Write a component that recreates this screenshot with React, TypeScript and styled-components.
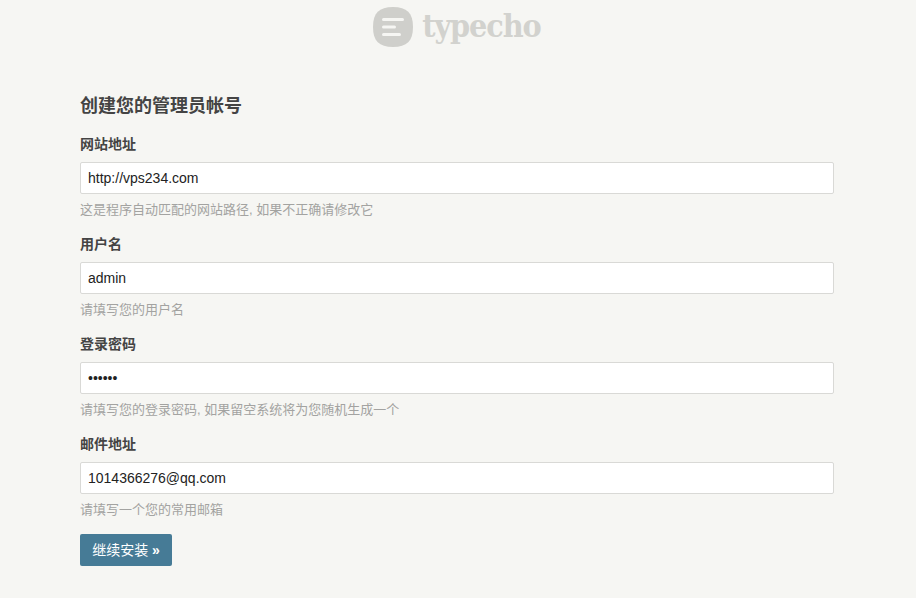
import React from "react";
import styled, { createGlobalStyle } from "styled-components";

const Global = createGlobalStyle`
  html, body { margin: 0; padding: 0; background: #f6f6f3; }
  body { font-family: "Liberation Sans", "Noto Sans CJK SC", sans-serif; font-size: 14px; color: #444; }
`;

const Page = styled.div`
  width: 916px;
  height: 598px;
  overflow: hidden;
  display: flex;
  flex-direction: column;
  align-items: center;
`;

const Logo = styled.div`
  display: flex;
  align-items: center;
  gap: 9px;
  height: 54px;
  margin-left: -2px;
`;

const Wordmark = styled.span`
  font-family: "DejaVu Serif Condensed", "DejaVu Serif", serif;
  font-weight: 700;
  font-size: 32px;
  letter-spacing: -1.1px;
  line-height: 1;
  color: #d2d2ce;
  margin-top: -2px;
`;

const Form = styled.form`
  width: 754px;
  margin: 0 0 0 -2px;
  padding-top: 40px;
`;

const Title = styled.h1`
  margin: 0 0 16px;
  font-size: 18px;
  line-height: 24px;
  font-weight: 700;
  color: #444;
`;

const Field = styled.div`
  display: flex;
  flex-direction: column;
  height: 100px;
`;

const Label = styled.label`
  font-size: 14px;
  line-height: 20px;
  font-weight: 700;
  color: #444;
  margin-bottom: 8px;
`;

const Input = styled.input`
  box-sizing: border-box;
  width: 100%;
  height: 32px;
  padding: 0 7px;
  margin: 0;
  border: 1px solid #d9d9d6;
  border-radius: 2px;
  background: #fff;
  color: #222;
  font-family: "Liberation Sans", "Noto Sans CJK SC", sans-serif;
  font-size: 14px;
  outline: none;
`;

const Hint = styled.p`
  margin: 6px 0 0;
  font-size: 13px;
  line-height: 19px;
  color: #a3a3a1;
`;

const Submit = styled.button`
  display: block;
  box-sizing: border-box;
  width: 92px;
  height: 32px;
  margin-top: 0;
  padding: 0 0 2px;
  border: none;
  border-radius: 2px;
  background: #467b96;
  color: #fff;
  font-family: "Liberation Sans", "Noto Sans CJK SC", sans-serif;
  font-size: 14px;
  font-weight: 400;
`;

const Arrows = styled.b`
  font-weight: 700;
`;

const fields = [
  { label: "网站地址", value: "http://vps234.com", type: "text", hint: "这是程序自动匹配的网站路径, 如果不正确请修改它" },
  { label: "用户名", value: "admin", type: "text", hint: "请填写您的用户名" },
  { label: "登录密码", value: "123456", type: "password", hint: "请填写您的登录密码, 如果留空系统将为您随机生成一个" },
  { label: "邮件地址", value: "1014366276@qq.com", type: "text", hint: "请填写一个您的常用邮箱" },
];

export default function App() {
  return (
    <Page>
      <Global />
      <Logo>
        <svg width="40" height="40" viewBox="0 0 40 40" aria-hidden="true">
          <path d="M20 0C34 0 40 6 40 20S34 40 20 40 0 34 0 20 6 0 20 0Z" fill="#cfcfcb" />
          <rect x="9" y="11" width="22" height="3" rx="1.5" fill="#f6f6f3" />
          <rect x="9" y="18.5" width="14" height="3" rx="1.5" fill="#f6f6f3" />
          <rect x="9" y="26" width="19" height="3" rx="1.5" fill="#f6f6f3" />
        </svg>
        <Wordmark>typecho</Wordmark>
      </Logo>
      <Form onSubmit={(e) => e.preventDefault()}>
        <Title>创建您的管理员帐号</Title>
        {fields.map((f) => (
          <Field key={f.label}>
            <Label>{f.label}</Label>
            <Input type={f.type} defaultValue={f.value} readOnly />
            <Hint>{f.hint}</Hint>
          </Field>
        ))}
        <Submit type="submit">继续安装 <Arrows>»</Arrows></Submit>
      </Form>
    </Page>
  );
}
